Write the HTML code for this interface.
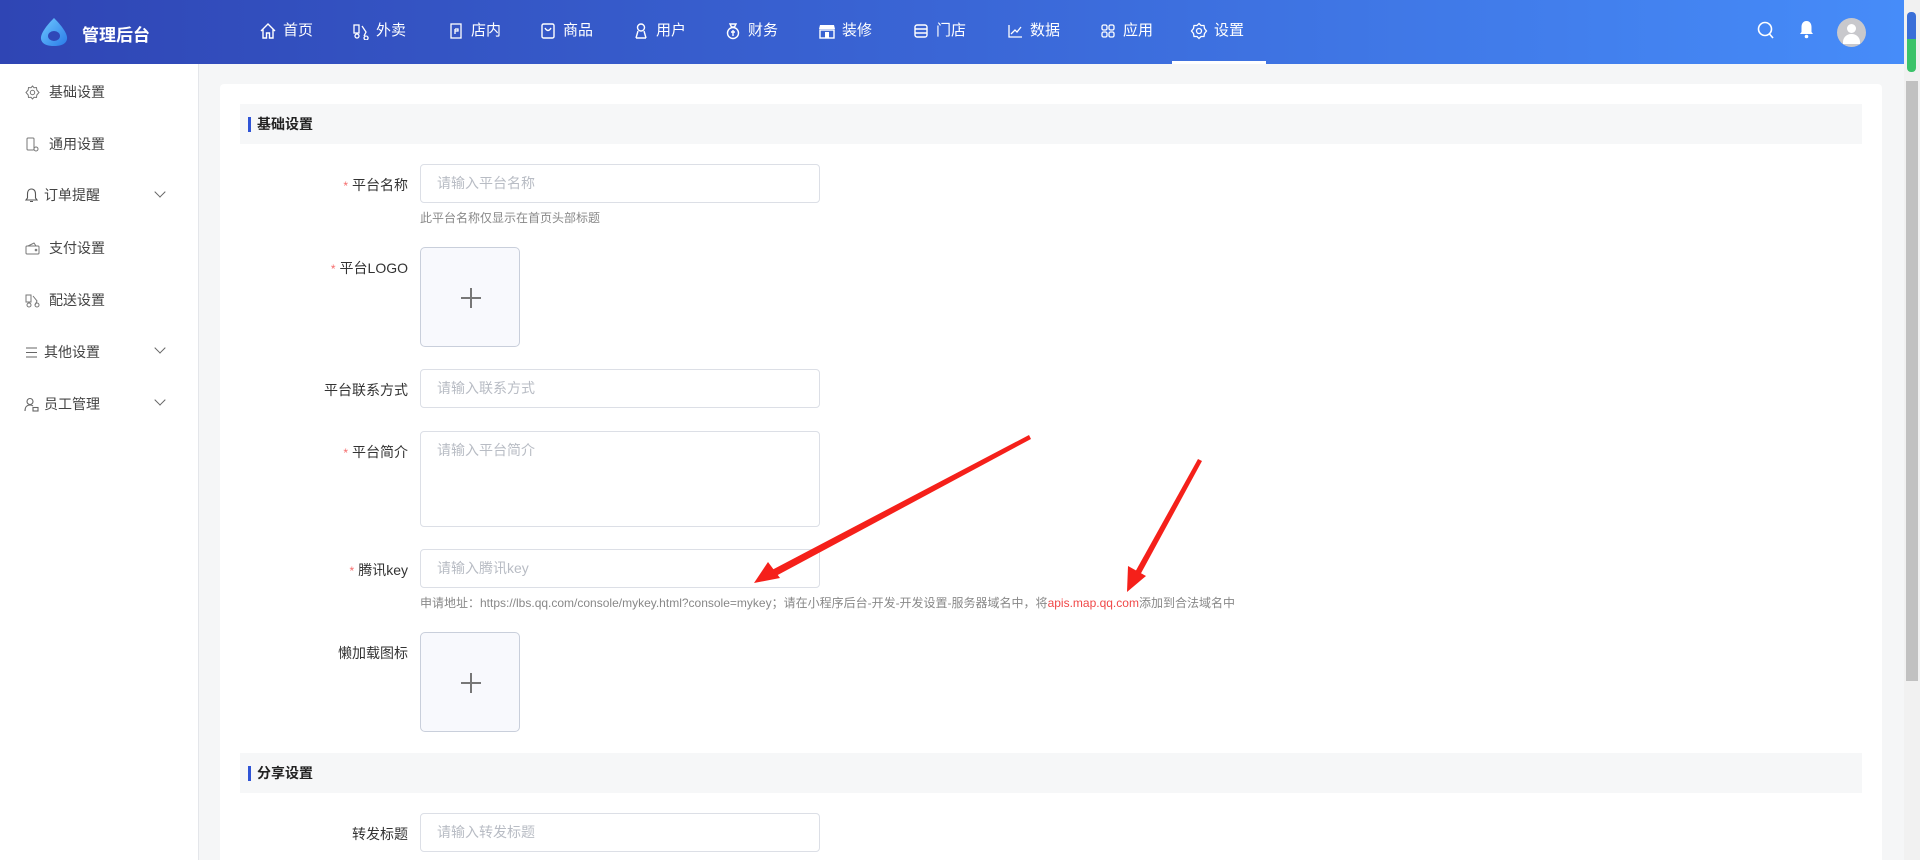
<!DOCTYPE html>
<html><head><meta charset="utf-8"><style>
*{box-sizing:border-box;margin:0;padding:0}
html{width:1920px;height:860px;overflow:hidden}
body{width:1920px;height:860px;overflow:hidden;font-family:"Liberation Sans","Noto Sans CJK SC",sans-serif;background:#f5f6f7;position:relative;color:#333}
.hdr{position:absolute;left:0;top:0;width:1904px;height:64px;background:linear-gradient(90deg,#2f45b4 0%,#3a66d6 50%,#468cf9 100%)}
.logo{position:absolute;left:39px;top:17px}
.brand{position:absolute;left:82px;top:21px;color:#fff;font-size:17px;font-weight:bold}
.nav{position:absolute;top:22px;color:#fff;font-size:15px;display:flex;align-items:center;gap:6px;line-height:18px}
.nav svg{width:18px;height:18px}
.act{position:absolute;left:1172px;top:61px;width:94px;height:3px;background:#fff}
.side{position:absolute;left:0;top:64px;width:199px;height:796px;background:#fff;border-right:1px solid #e4e6ea}
.si{position:absolute;left:25px;font-size:14px;color:#444;display:flex;align-items:center}
.si svg{width:15px;height:15px;margin-right:9px}
.chev{position:absolute;left:156px;width:8px;height:8px;border-right:1.3px solid #666;border-bottom:1.3px solid #666;transform:rotate(45deg)}
.card{position:absolute;left:220px;top:84px;width:1662px;height:776px;background:#fff;border-radius:4px 4px 0 0}
.sec{position:absolute;left:240px;width:1622px;height:40px;background:#f6f7f8;font-size:14px;font-weight:bold;color:#222;line-height:40px;padding-left:17px}
.sec:before{content:"";position:absolute;left:8px;top:13px;width:3px;height:15px;background:#2f54d6}
.lbl{position:absolute;right:1512px;font-size:14px;color:#333;white-space:nowrap}
.lbl i{color:#f56c6c;font-style:normal;margin-right:4px;font-size:12px}
.inp{position:absolute;left:420px;width:400px;height:39px;border:1px solid #dcdfe6;border-radius:4px;font-size:14px;color:#b8bcc4;padding:10px 16px;line-height:17px}
.up{position:absolute;left:420px;width:100px;height:100px;border:1px solid #c9cfdb;border-radius:5px;background:#f8f9fd}
.up:before{content:"";position:absolute;left:40px;top:49px;width:20px;height:1.5px;background:#777}
.up:after{content:"";position:absolute;left:49px;top:40px;width:1.5px;height:20px;background:#777}
.help{position:absolute;left:420px;font-size:12px;color:#888;white-space:nowrap}
</style></head><body>
<div class="hdr">
<svg class="logo" width="30" height="30" viewBox="0 0 30 30"><defs><linearGradient id="g" x1="0" y1="0" x2="1" y2="1"><stop offset="0" stop-color="#6ec8ff"/><stop offset="1" stop-color="#2a7be8"/></linearGradient></defs><path d="M15 1 C20 6 29 16 28 22 C27 28 20 29 15 29 C10 29 3 28 2 22 C1 16 10 6 15 1Z" fill="url(#g)"/><ellipse cx="15" cy="19" rx="6" ry="5" fill="#2f48b8"/></svg>
<div class="brand">管理后台</div>
<div class="nav" style="left:259px"><svg viewBox="0 0 18 18" fill="none" stroke="#fff" stroke-width="1.4"><path d="M2 9 L9 2 L16 9 M4 7.5 V16 H7.5 V11 H10.5 V16 H14 V7.5"/></svg>首页</div>
<div class="nav" style="left:352px"><svg viewBox="0 0 18 18" fill="none" stroke="#fff" stroke-width="1.3"><rect x="2" y="3" width="5" height="8"/><circle cx="5" cy="14" r="2"/><path d="M10 4 L14 10 L12 14 M14 14 a2 2 0 1 0 .1 0"/></svg>外卖</div>
<div class="nav" style="left:447px"><svg viewBox="0 0 18 18" fill="none" stroke="#fff" stroke-width="1.3"><rect x="4" y="2" width="10" height="14"/><path d="M8 7 V12 M8 7 H11 V9 H8"/></svg>店内</div>
<div class="nav" style="left:539px"><svg viewBox="0 0 18 18" fill="none" stroke="#fff" stroke-width="1.4"><rect x="3" y="2" width="12" height="14" rx="1.5"/><path d="M6 6 Q9 11 12 6"/></svg>商品</div>
<div class="nav" style="left:632px"><svg viewBox="0 0 18 18" fill="none" stroke="#fff" stroke-width="1.4"><circle cx="9" cy="5.5" r="3.5"/><path d="M4 16 L6 9 M14 16 L12 9 M4 16 H14"/></svg>用户</div>
<div class="nav" style="left:724px"><svg viewBox="0 0 18 18" fill="none" stroke="#fff" stroke-width="1.4"><path d="M6 2 H12 L10.5 5 H7.5Z"/><circle cx="9" cy="11" r="5.5"/><path d="M7 10 H11 M9 8 V14"/></svg>财务</div>
<div class="nav" style="left:818px"><svg viewBox="0 0 18 18" fill="#fff"><path d="M2 3 H16 L17 7 H1Z"/><rect x="2" y="8" width="14" height="8" fill="none" stroke="#fff" stroke-width="1.4"/><rect x="7" y="10" width="4" height="6"/></svg>装修</div>
<div class="nav" style="left:912px"><svg viewBox="0 0 18 18" fill="none" stroke="#fff" stroke-width="1.4"><rect x="3" y="3" width="12" height="12" rx="2"/><path d="M3 7 H15 M3 11 H15"/></svg>门店</div>
<div class="nav" style="left:1006px"><svg viewBox="0 0 18 18" fill="none" stroke="#fff" stroke-width="1.3"><path d="M3 3 V15 H16 M5 12 L9 8 L11 10 L15 5"/></svg>数据</div>
<div class="nav" style="left:1099px"><svg viewBox="0 0 18 18" fill="none" stroke="#fff" stroke-width="1.3"><rect x="3" y="3" width="5" height="5" rx="1.5"/><rect x="10" y="3" width="5" height="5" rx="1.5"/><rect x="3" y="10" width="5" height="5" rx="1.5"/><rect x="10" y="10" width="5" height="5" rx="1.5"/></svg>应用</div>
<div class="nav" style="left:1190px"><svg viewBox="0 0 18 18" fill="none" stroke="#fff" stroke-width="1.3"><path d="M9 1.5 L11 3.5 L14 3.5 L14.5 6.5 L16.5 9 L14.5 11.5 L14 14.5 L11 14.5 L9 16.5 L7 14.5 L4 14.5 L3.5 11.5 L1.5 9 L3.5 6.5 L4 3.5 L7 3.5Z"/><circle cx="9" cy="9" r="2.5"/></svg>设置</div>
<div class="act"></div>
<svg style="position:absolute;left:1757px;top:21px" width="18" height="20" viewBox="0 0 18 20" fill="none" stroke="#fff" stroke-width="1.6"><circle cx="8" cy="8" r="6.5"/><path d="M12.5 13 L16 17"/></svg>
<svg style="position:absolute;left:1799px;top:20px" width="15" height="19" viewBox="0 0 15 19" fill="#fff"><path d="M7.5 1 C4 1 2.5 4 2.5 7 V12 L1 14 H14 L12.5 12 V7 C12.5 4 11 1 7.5 1Z"/><circle cx="7.5" cy="16.5" r="1.8"/></svg>
<div style="position:absolute;left:1837px;top:18px;width:29px;height:29px;border-radius:50%;background:#c8c8cc;overflow:hidden"><div style="position:absolute;left:10px;top:6px;width:9px;height:9px;border-radius:50%;background:#fff"></div><div style="position:absolute;left:6px;top:16px;width:17px;height:10px;border-radius:8px 8px 0 0;background:#fff"></div></div>
</div>
<div style="position:absolute;left:1904px;top:0;width:16px;height:860px;background:#f1f1f1"></div>
<div style="position:absolute;left:1907px;top:12px;width:9px;height:60px;border-radius:4px;background:linear-gradient(#3a6fd8 0 45%,#3cc36a 45%)"></div>
<div style="position:absolute;left:1906px;top:81px;width:12px;height:600px;background:#c1c1c1"></div>
<div class="side">
<div class="si" style="top:18px"><svg viewBox="0 0 15 15" fill="none" stroke="#777" stroke-width="1"><path d="M7.5 1 L9 2.7 L11.5 2.5 L11.8 5 L14 7.5 L11.8 10 L11.5 12.5 L9 12.3 L7.5 14 L6 12.3 L3.5 12.5 L3.2 10 L1 7.5 L3.2 5 L3.5 2.5 L6 2.7Z"/><circle cx="7.5" cy="7.5" r="2.2"/></svg>基础设置</div>
<div class="si" style="top:70px"><svg viewBox="0 0 15 15" fill="none" stroke="#777" stroke-width="1"><rect x="2" y="1" width="7" height="12" rx="1"/><circle cx="11" cy="12" r="2"/></svg>通用设置</div>
<div class="si" style="top:121px;left:24px"><svg viewBox="0 0 15 15" fill="none" stroke="#555" stroke-width="1.1" style="margin-right:5px"><path d="M7.5 1 C4.5 1 3.5 3.5 3.5 6 V10 L2 12 H13 L11.5 10 V6 C11.5 3.5 10.5 1 7.5 1Z M6 13.5 H9"/></svg>订单提醒</div>
<div class="chev" style="top:124px"></div>
<div class="si" style="top:174px"><svg viewBox="0 0 15 15" fill="none" stroke="#777" stroke-width="1"><rect x="1" y="5" width="13" height="8" rx="1"/><path d="M3 5 L9 2 L11 5"/><circle cx="11" cy="9" r=".8"/></svg>支付设置</div>
<div class="si" style="top:226px"><svg viewBox="0 0 15 15" fill="none" stroke="#777" stroke-width="1"><rect x="1" y="2" width="5" height="7"/><circle cx="4" cy="12" r="2"/><path d="M8 3 L12 8 L10 12"/><circle cx="12" cy="12" r="2"/></svg>配送设置</div>
<div class="si" style="top:278px;left:24px"><svg viewBox="0 0 15 15" fill="none" stroke="#666" stroke-width="1.1" style="margin-right:5px"><path d="M2 3 H13 M2 7.5 H13 M2 12 H13"/></svg>其他设置</div>
<div class="chev" style="top:280px"></div>
<div class="si" style="top:330px;left:24px"><svg viewBox="0 0 15 15" fill="none" stroke="#666" stroke-width="1.1" style="margin-right:5px"><circle cx="6" cy="4.5" r="3"/><path d="M1 14 C1 10 3 8 6 8 C7.5 8 8.5 8.5 9 9"/><rect x="9" y="10.5" width="5" height="3.5"/></svg>员工管理</div>
<div class="chev" style="top:332px"></div>
</div>
<div class="card"></div>
<div class="sec" style="top:104px">基础设置</div>
<div class="lbl" style="top:175px"><i>*</i>平台名称</div>
<div class="inp" style="top:164px">请输入平台名称</div>
<div class="help" style="top:209px">此平台名称仅显示在首页头部标题</div>
<div class="lbl" style="top:258px"><i>*</i>平台LOGO</div>
<div class="up" style="top:247px"></div>
<div class="lbl" style="top:380px">平台联系方式</div>
<div class="inp" style="top:369px">请输入联系方式</div>
<div class="lbl" style="top:442px"><i>*</i>平台简介</div>
<div class="inp" style="top:431px;height:96px">请输入平台简介</div>
<div class="lbl" style="top:560px"><i>*</i>腾讯key</div>
<div class="inp" style="top:549px">请输入腾讯key</div>
<div class="help" style="top:594px">申请地址：https://lbs.qq.com/console/mykey.html?console=mykey；请在小程序后台-开发-开发设置-服务器域名中，将<span style="color:#f04848">apis.map.qq.com</span>添加到合法域名中</div>
<div class="lbl" style="top:643px">懒加载图标</div>
<div class="up" style="top:632px"></div>
<div class="sec" style="top:753px">分享设置</div>
<div class="lbl" style="top:824px">转发标题</div>
<div class="inp" style="top:813px">请输入转发标题</div>
<svg style="position:absolute;left:0;top:0" width="1920" height="860"><g fill="#f5201a"><polygon points="1029,435 1031,439 774,577 770,571"/><polygon points="754,583 768,562 780,578"/><polygon points="1198,459 1202,461 1139,577 1134,574"/><polygon points="1127,592 1128,566 1146,576"/></g></svg>
</body></html>
